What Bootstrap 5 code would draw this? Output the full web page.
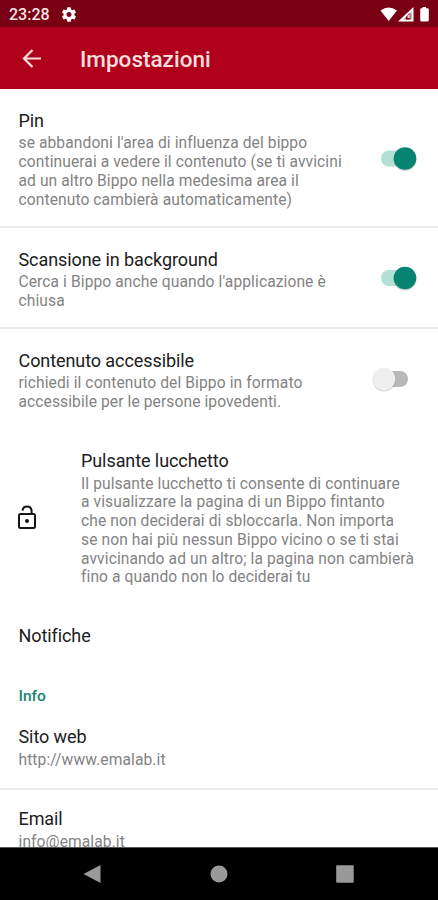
<!DOCTYPE html>
<html lang="it">
<head>
<meta charset="utf-8">
<meta name="viewport" content="width=device-width, initial-scale=1">
<title>Impostazioni</title>
<link href="https://cdn.jsdelivr.net/npm/bootstrap@5.3.0/dist/css/bootstrap.min.css" rel="stylesheet">
<style>
body{font-family:Roboto,"Noto Sans",sans-serif;background:#fff;color:#202020}
.screen{height:900px;width:438px}
.status{height:27px;background:#790012;color:#f7e4e4;font-size:16px;font-weight:500;padding:2px 8px 0 9px;line-height:24px}
.gear{margin-left:7px}
.appbar{height:62px;background:#b0001b;padding:1px 21px 0;color:#f9dede}
.appbar h1{font-size:22.5px;font-weight:500;margin-left:37px;line-height:30px}
.content{height:758px}
.pref{padding:0 21px 0 18.5px;border-bottom:2px solid #ebebeb}
.plain{border-bottom-color:transparent}
.copy{padding-top:4px}
.ttl{font-size:18px;line-height:22px;letter-spacing:-.08px;white-space:nowrap}
.sum{font-size:15.6px;line-height:18.7px;color:#838383;white-space:nowrap;letter-spacing:.09px;margin-top:2.6px}
.h-pin{height:139px}.h-two{height:101px}.h-lock{height:175px}.h-one{height:63px}.h-link{height:82px}
.h-info{height:40px;padding-left:18.5px;font-size:15.5px;font-weight:500;color:#15846e;padding-top:16.5px;line-height:22px}
.lead-icon{width:62.5px}
.lead-icon svg{margin-left:-1px}
.sysnav{height:53px;background:#000;border-top:1px solid #555;padding:0 84px 0 83px}
</style>
<script src="https://cdn.jsdelivr.net/npm/bootstrap@5.3.0/dist/js/bootstrap.bundle.min.js"></script>
</head>
<body>
<div class="screen d-flex flex-column overflow-hidden">
  <div class="status d-flex align-items-center">
    <span>23:28</span>
    <svg class="gear" width="24" height="24" viewBox="0 0 24 24"><g transform="translate(12 11.500) scale(.72) translate(-12 -12)"><path fill="#fff" fill-rule="evenodd" d="M19.43 12.98c.04-.32.07-.64.07-.98s-.03-.66-.07-.98l2.11-1.65c.19-.15.24-.42.12-.64l-2-3.46c-.12-.22-.39-.3-.61-.22l-2.49 1c-.52-.4-1.08-.73-1.69-.98l-.38-2.65A.49.49 0 0 0 14 2h-4c-.25 0-.46.18-.49.42l-.38 2.65c-.61.25-1.17.59-1.69.98l-2.49-1c-.23-.09-.49 0-.61.22l-2 3.46c-.13.22-.07.49.12.64l2.11 1.65c-.04.32-.07.65-.07.98s.03.66.07.98l-2.11 1.65c-.19.15-.24.42-.12.64l2 3.46c.12.22.39.3.61.22l2.49-1c.52.4 1.08.73 1.69.98l.38 2.65c.03.24.24.42.49.42h4c.25 0 .46-.18.49-.42l.38-2.65c.61-.25 1.17-.59 1.69-.98l2.49 1c.23.09.49 0 .61-.22l2-3.46c.12-.22.07-.49-.12-.64l-2.11-1.65zM12 15.5c-1.93 0-3.5-1.57-3.5-3.5s1.57-3.5 3.500-3.5 3.500 1.57 3.500 3.500-1.570 3.500-3.500 3.500z"/></g></svg>
    <svg class="ms-auto" width="50" height="18" viewBox="0 0 50 18"><path fill="#fff" d="M.5 4.500Q8.500-1.500 17 4.500L8.700 15z"/><path fill="#fff" d="M18 15.500 33.500 1v14.500z"/><path fill="#790012" d="M23.500 13.500 31.500 6v7.500z" opacity=".55"/><path fill="#790012" d="M26 13.500V11l3.500-4v6.500z"/><path fill="#e8c8cc" d="M27.500 9.500 29.800 8v4h-2.300z"/><path fill="#fff" d="M42.500 2.200V1h3.500v1.200h1.500q1.300 0 1.300 1.300V14q0 1.500-1.300 1.500h-6Q40.200 15.500 40.200 14V3.500q0-1.300 1.300-1.300z"/></svg>
  </div>
  <header class="appbar d-flex align-items-center">
    <svg width="22" height="22" viewBox="0 0 22 22" fill="none" stroke="#f9dede" stroke-width="2.200"><path d="M20 10.500H3.500M11.500 2 3 10.500 11.500 19"/></svg>
    <h1 class="mb-0">Impostazioni</h1>
  </header>
  <main class="content overflow-hidden">
    <div class="pref h-pin d-flex align-items-center justify-content-between">
      <div class="copy"><div class="ttl">Pin</div><div class="sum">se abbandoni l'area di influenza del bippo<br>continuerai a vedere il contenuto (se ti avvicini<br>ad un altro Bippo nella medesima area il<br>contenuto cambierà automaticamente)</div></div>
      <svg class="flex-shrink-0" width="36" height="28" viewBox="0 0 36 28"><rect x="0" y="6.500" width="32" height="16" rx="8" fill="#b3dfd5"/><circle cx="24" cy="15.500" r="11.500" fill="#000" opacity=".15"/><circle cx="24" cy="14.500" r="11.300" fill="#078372"/></svg>
    </div>
    <div class="pref h-two d-flex align-items-center justify-content-between">
      <div class="copy"><div class="ttl">Scansione in background</div><div class="sum">Cerca i Bippo anche quando l'applicazione è<br>chiusa</div></div>
      <svg class="flex-shrink-0" width="36" height="28" viewBox="0 0 36 28"><rect x="0" y="6" width="32" height="16" rx="8" fill="#b3dfd5"/><circle cx="24" cy="15" r="11.500" fill="#000" opacity=".15"/><circle cx="24" cy="14" r="11.300" fill="#078372"/></svg>
    </div>
    <div class="pref plain h-two d-flex align-items-center justify-content-between">
      <div class="copy"><div class="ttl">Contenuto accessibile</div><div class="sum">richiedi il contenuto del Bippo in formato<br>accessibile per le persone ipovedenti.</div></div>
      <svg class="flex-shrink-0" width="46" height="28" viewBox="0 0 46 28"><rect x="6" y="6" width="31" height="16" rx="8" fill="#b8b8b8"/><circle cx="13" cy="15" r="11.500" fill="#000" opacity=".15"/><circle cx="13" cy="14" r="11.300" fill="#eee"/></svg>
    </div>
    <div class="pref plain h-lock d-flex align-items-center">
      <div class="lead-icon flex-shrink-0"><svg width="18" height="24" viewBox="0 0 18 24" fill="none" stroke="#151515" stroke-width="2"><rect x="1" y="9" width="16" height="14" rx="1.500"/><path d="M4.500 5.500A4.600 4.600 0 0 1 13.600 5.500V9"/><circle cx="9" cy="16" r="2" fill="#151515" stroke="none"/></svg></div>
      <div class="copy"><div class="ttl">Pulsante lucchetto</div><div class="sum">Il pulsante lucchetto ti consente di continuare<br>a visualizzare la pagina di un Bippo fintanto<br>che non deciderai di sbloccarla. Non importa<br>se non hai più nessun Bippo vicino o se ti stai<br>avvicinando ad un altro; la pagina non cambierà<br>fino a quando non lo deciderai tu</div></div>
    </div>
    <div class="pref plain h-one d-flex align-items-center"><div class="ttl">Notifiche</div></div>
    <div class="h-info">Info</div>
    <div class="pref h-link d-flex align-items-center"><div><div class="ttl">Sito web</div><div class="sum">http://www.emalab.it</div></div></div>
    <div class="pref plain h-link d-flex align-items-center"><div><div class="ttl">Email</div><div class="sum">info@emalab.it</div></div></div>
  </main>
  <nav class="sysnav d-flex align-items-center justify-content-between" aria-label="Sistema">
    <svg width="18" height="20" viewBox="0 0 18 20"><path fill="#999" d="M17.500 1v18L.5 10z"/></svg>
    <svg width="18" height="18" viewBox="0 0 18 18"><circle cx="9" cy="9" r="8.500" fill="#999"/></svg>
    <svg width="18" height="18" viewBox="0 0 18 18"><rect x=".2" y=".2" width="17.500" height="17.500" rx="1" fill="#999"/></svg>
  </nav>
</div>
</body>
</html>
